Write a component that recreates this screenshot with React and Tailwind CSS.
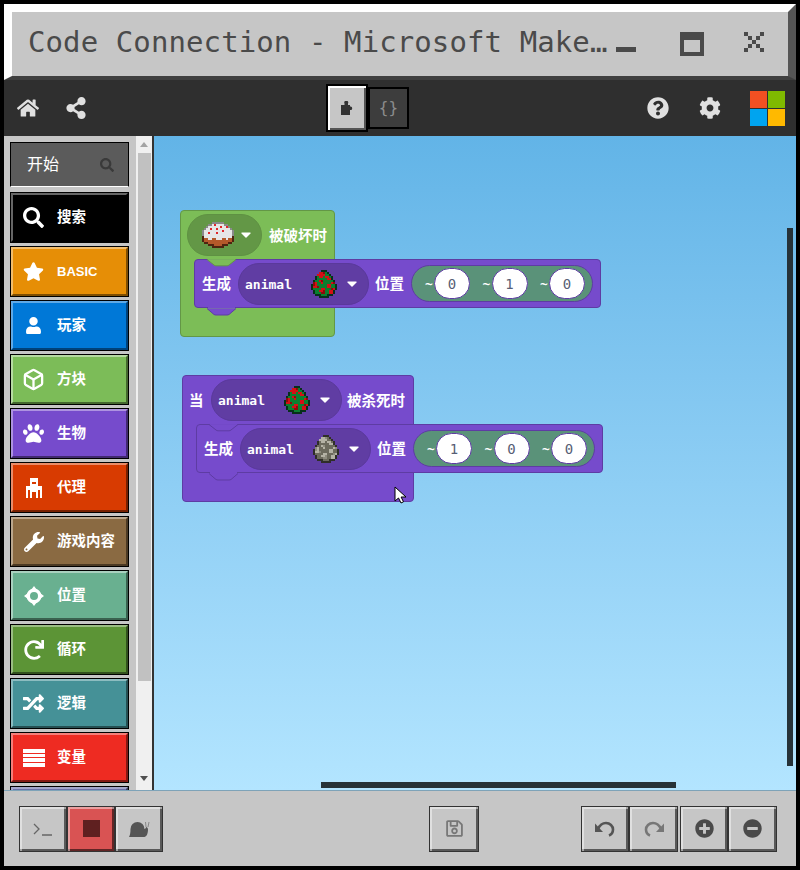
import React from 'react';
import {
  FaSearch, FaStar, FaUser, FaPaw, FaWrench, FaRedo, FaRandom, FaHome, FaShareAlt,
  FaQuestionCircle, FaCog, FaRegSave, FaPlusCircle, FaMinusCircle,
} from 'react-icons/fa';
import { Box } from 'lucide-react';

const CJK = "font-['Liberation_Sans','Noto_Sans_CJK_SC',sans-serif]";
const MONO = "font-['DejaVu_Sans_Mono',monospace]";

// pixel drawing helper, one char = one colour from the palette
const Pixels = ({ rows, palette, size, className }) => (
  <svg
    className={className}
    width={rows[0].length * size}
    height={rows.length * size}
    viewBox={`0 0 ${rows[0].length} ${rows.length}`}
    shapeRendering="crispEdges"
  >
    {rows.map((row, y) =>
      row.split('').map((c, x) =>
        palette[c] ? <rect key={`${x}-${y}`} x={x} y={y} width="1" height="1" fill={palette[c]} /> : null
      )
    )}
  </svg>
);

const EGG = [
  '.....ccc.....',
  '....bbdac....',
  '...bbbbaac...',
  '..cabbabbac..',
  '..caaaaabbc..',
  '.caabdaaaaac.',
  '.dbaabaaaabd.',
  'cdbaaaaabbaac',
  'cbbdaaaabbaac',
  'caaaabbaaadbc',
  '.caabbdaabbc.',
  '.caaaddaabbc.',
  '..cccaaaccc..',
  '....ccccc....',
];
const GREEN_EGG = { a: '#0b7f2f', b: '#d40f14', c: '#07301a', d: '#8a0b0b' };
const GRAY_EGG = { a: '#6c6a5d', b: '#b4b2a5', c: '#2f2e28', d: '#8e8c7f' };

const CAKE = [
  '.....ssssss.....',
  '...sswrwwwwss...',
  '..swwwwwwrwwrs..',
  '.swwrwwrwwwwwws.',
  'swwwwwwwwwrwwwws',
  'swwrwwwrwwwwwwws',
  'swwwwwwwwwwwwwws',
  'dwwwwwwwwwwwwwwd',
  'dbbwwbbwwwbbwbbd',
  'dbbbbbbbbbbbbbbd',
  '.ddbbbbbbbbbbdd.',
  '...dddbbbbddd...',
  '.....dddddd.....',
];
const CAKE_COLORS = { s: '#8a8a8a', w: '#e6e6e6', r: '#e0262a', b: '#b4592a', d: '#4f2410' };

const AGENT = [
  '..kkkk..',
  '..kkkk..',
  '..k..k..',
  '..kkkk..',
  'kkkkkkkk',
  'kkkkkkkk',
  'k.kkkk.k',
  'k.k..k.k',
  'k.k..k.k',
  'k.k..k.k',
];

const MoveIcon = () => (
  <svg width="20" height="20" viewBox="0 0 20 20" fill="white">
    <path fillRule="evenodd" d="M10 2.500a7.500 7.500 0 1 0 0 15 7.500 7.500 0 0 0 0-15Zm0 3.500a4 4 0 1 1 0 8 4 4 0 0 1 0-8Z" />
    <path d="M10 0l3 4H7zM10 20l-3-4h6zM0 10l4-3v6zM20 10l-4 3V7z" />
  </svg>
);

const BarsIcon = () => (
  <svg width="22" height="18" viewBox="0 0 22 18" fill="white" shapeRendering="crispEdges">
    <path d="M0 0h22v3.500H0zM0 4.700h22v3.500H0zM0 9.400h22v3.500H0zM0 14.100h22v3.500H0z" />
  </svg>
);

const PuzzleIcon = () => (
  <svg width="12" height="14" viewBox="0 0 12 14" fill="#333">
    <path d="M0 4h3.500V2.500a2 2 0 1 1 3.500 0V4h2v1.500a1.800 1.800 0 1 1 0 3.500V14H0Z" />
  </svg>
);

const UndoIcon = () => (
  <svg width="20" height="16" viewBox="0 0 20 16" fill="none">
    <path d="M3 8C5 3.500 8 2 11 2c4 0 7 3 7 6.500 0 3-1.500 5-4 6" stroke="currentColor" strokeWidth="2.600" />
    <path d="M0 2.500V11h8Z" fill="currentColor" />
  </svg>
);

const categories = [
  { label: '搜索', color: 'bg-black border-t-[#666] border-l-[#666] border-r-black border-b-black', icon: <FaSearch size={21} /> },
  { label: 'BASIC', latin: true, color: 'bg-[#e68e06] border-t-[#f2bd6c] border-l-[#f2bd6c] border-r-[#7e4e03] border-b-[#7e4e03]', icon: <FaStar size={21} /> },
  { label: '玩家', color: 'bg-[#0078d7] border-t-[#5fa9e6] border-l-[#5fa9e6] border-r-[#00427a] border-b-[#00427a]', icon: <FaUser size={17} /> },
  { label: '方块', color: 'bg-[#7cbc58] border-t-[#b6daa2] border-l-[#b6daa2] border-r-[#44672f] border-b-[#44672f]', icon: <Box size={23} strokeWidth={2.4} /> },
  { label: '生物', color: 'bg-[#764bcc] border-t-[#ad92e0] border-l-[#ad92e0] border-r-[#412970] border-b-[#412970]', icon: <FaPaw size={21} /> },
  { label: '代理', color: 'bg-[#d83b01] border-t-[#e98d6a] border-l-[#e98d6a] border-r-[#772000] border-b-[#772000]', icon: <Pixels rows={AGENT} palette={{ k: '#ffffff' }} size={2} /> },
  { label: '游戏内容', color: 'bg-[#8a6a42] border-t-[#bba78d] border-l-[#bba78d] border-r-[#4c3a24] border-b-[#4c3a24]', icon: <FaWrench size={20} /> },
  { label: '位置', color: 'bg-[#69b090] border-t-[#a9d1bf] border-l-[#a9d1bf] border-r-[#3a614f] border-b-[#3a614f]', icon: <MoveIcon /> },
  { label: '循环', color: 'bg-[#5c9436] border-t-[#9abd83] border-l-[#9abd83] border-r-[#32511e] border-b-[#32511e]', icon: <FaRedo size={20} /> },
  { label: '逻辑', color: 'bg-[#459197] border-t-[#8cbcc0] border-l-[#8cbcc0] border-r-[#265053] border-b-[#265053]', icon: <FaRandom size={21} /> },
  { label: '变量', color: 'bg-[#ee2b22] border-t-[#f57f7a] border-l-[#f57f7a] border-r-[#831813] border-b-[#831813]', icon: <BarsIcon /> },
  { label: '', color: 'bg-[#6a6ea8] border-t-[#a3a5cb] border-l-[#a3a5cb] border-r-[#3a3d5c] border-b-[#3a3d5c]', icon: null },
];

const Caret = () => (
  <svg width="10" height="6" viewBox="0 0 10 6" className="shrink-0">
    <path d="M1 .5h8a.7.7 0 0 1 .5 1.100L5.500 5.400a.7.7 0 0 1-1 0L.5 1.600A.7.7 0 0 1 1 .5Z" fill="white" />
  </svg>
);

const Label = ({ children, className = '' }) => (
  <span className={`${CJK} pt-[2px] text-[14.5px] font-bold leading-none text-white whitespace-nowrap ${className}`}>{children}</span>
);

const AnimalDropdown = ({ palette }) => (
  <div className="flex h-[42px] w-[131px] shrink-0 items-center rounded-full border border-[#5a399b] bg-[#603da3] pl-[6px]">
    <span className={`${MONO} w-[66px] pt-[1px] text-[13px] font-bold leading-none text-white`}>animal</span>
    <Pixels rows={EGG} palette={palette} size={2} />
    <span className="ml-[10px]"><Caret /></span>
  </div>
);

const Coord = ({ value }) => (
  <div className="flex items-center">
    <span className={`${MONO} w-[9px] text-[13px] font-bold leading-none text-white`}>~</span>
    <div className={`${MONO} flex h-[31px] w-[36px] items-center justify-center rounded-full border border-[#5e3ca3] bg-white pt-[1px] text-[14px] text-[#575e75]`}>
      {value}
    </div>
  </div>
);

// the "spawn animal at position" block used in both stacks
const SpawnBlock = ({ palette, coords, topNotch }) => (
  <div className="relative ml-[13px] flex h-[49px] w-[407px] items-center rounded-[4px] border border-[#5e3ca3] bg-[#764bcc] pl-[7px]">
    {topNotch}
    <Label className="w-[36px]">生成</Label>
    <AnimalDropdown palette={palette} />
    <Label className="ml-[6px] w-[36px]">位置</Label>
    <div className="flex h-[37px] w-[182px] items-center justify-between rounded-full border border-[#5e3ca3] bg-[#5a9279] pl-[13px] pr-[7px]">
      {coords.map((v, i) => <Coord key={i} value={v} />)}
    </div>
    <svg className="absolute left-[12px] top-[47px]" width="30" height="9" viewBox="0 0 30 9">
      <path d="M0 1.500 L7 7.500 Q8 8 9 8 H20 Q21 8 22 7.500 L29 1.500" fill="#764bcc" stroke="#5e3ca3" />
      <path d="M1 0H28V1.500H1Z" fill="#764bcc" />
    </svg>
  </div>
);

const Notch = ({ fill, stroke }) => (
  <svg className="absolute left-[12px] top-[-1px]" width="30" height="8" viewBox="0 0 30 8">
    <path d="M0 .5 L7 6 Q8 6.800 9 6.800 H20 Q21 6.800 22 6 L29 .5" fill={fill} stroke={stroke} />
    <path d="M1 0H28V.8H1Z" fill={fill} />
  </svg>
);

const ToolButton = ({ className = '', children }) => (
  <div className={`flex h-[46px] items-center justify-center border border-[#333] shadow-[inset_2px_2px_0_rgba(255,255,255,0.45),inset_-2px_-2px_0_rgba(0,0,0,0.55)] ${className}`}>
    {children}
  </div>
);

export default function App() {
  return (
    <div className="flex h-[870px] w-[800px] flex-col overflow-hidden bg-black p-1">
      {/* title bar */}
      <div className="flex h-[76px] shrink-0 items-start border-b-[4px] border-l-[8px] border-r-[8px] border-t-[8px] border-b-[#3f3f3f] border-l-white border-r-[#555] border-t-white bg-[#c6c6c6]">
        <span className={`${MONO} ml-[16px] mt-[10px] w-[588px] whitespace-nowrap text-[29px] leading-[40px] tracking-[0.1px] text-[#4a4a4a]`}>
          Code Connection - Microsoft Make…
        </span>
        <div className="mt-[35px] h-[5px] w-[20px] bg-[#4a4a4a]" />
        <div className="ml-[44px] mt-[20px] h-[24px] w-[24px] border-[4px] border-t-[8px] border-[#4a4a4a]" />
        <svg className="ml-[40px] mt-[20px]" width="20" height="20" viewBox="0 0 10 10" shapeRendering="crispEdges" fill="#4a4a4a">
          <path d="M0 0h2v2H0zM8 0h2v2H8zM2 2h2v2H2zM6 2h2v2H6zM4 4h2v2H4zM2 6h2v2H2zM6 6h2v2H6zM0 8h2v2H0zM8 8h2v2H8z" />
        </svg>
      </div>

      {/* toolbar */}
      <div className="flex h-[56px] shrink-0 items-center bg-[#2f2f2f] text-[#e0e0e0]">
        <div className="flex w-[322px] items-center gap-[26px] pl-[13px]">
          <FaHome size={22} />
          <FaShareAlt size={22} />
        </div>
        <div className="flex items-center">
          <div className="flex h-[48px] w-[42px] items-center justify-center border-[2px] border-black bg-[#c6c6c6] shadow-[inset_2px_2px_0_#fff,inset_-2px_-2px_0_#555]">
            <PuzzleIcon />
          </div>
          <div className={`${MONO} flex h-[42px] w-[41px] items-center justify-center border-[2px] border-black bg-[#3d3d3d] text-[16px] text-[#8c8c8c]`}>
            {'{}'}
          </div>
        </div>
        <div className="ml-auto flex items-center pr-[11px]">
          <FaQuestionCircle size={22} />
          <span className="ml-[30px]"><FaCog size={22} /></span>
          <div className="ml-[29px] grid h-[35px] w-[35px] grid-cols-2 gap-[1px]">
            <div className="bg-[#f25022]" />
            <div className="bg-[#7fba00]" />
            <div className="bg-[#00a4ef]" />
            <div className="bg-[#ffb900]" />
          </div>
        </div>
      </div>

      {/* workspace */}
      <div className="flex h-[654px] shrink-0">
        <div className="flex w-[132px] shrink-0 flex-col overflow-hidden bg-[#c6c6c6] pl-[6px] pt-[6px]">
          <div className="mb-[5px] flex h-[45px] w-[119px] shrink-0 items-center justify-between border border-black border-b-white bg-[#5b5b5b] pl-[16px] pr-[14px]">
            <span className={`${CJK} text-[16px] leading-none text-white`}>开始</span>
            <FaSearch size={14} className="text-[#3a3a3a]" />
          </div>
          <div className="flex flex-col gap-[3px]">
            {categories.map((c, i) => (
              <div key={i} className="h-[51px] w-[119px] shrink-0 border border-black">
                <div className={`flex h-full items-center border-[2px] text-white ${c.color}`}>
                  <span className="flex w-[41px] shrink-0 justify-center">{c.icon}</span>
                  <span className={`${CJK} ml-[3px] font-bold leading-none ${c.latin ? 'text-[13px]' : 'text-[14.5px]'}`}>{c.label}</span>
                </div>
              </div>
            ))}
          </div>
        </div>

        {/* sidebar scrollbar */}
        <div className="flex w-[16px] shrink-0 flex-col items-center bg-[#f0f0f0]">
          <svg className="mt-[6px]" width="8" height="5" viewBox="0 0 8 5"><path d="M4 0l4 5H0z" fill="#a3a3a3" /></svg>
          <div className="mt-[6px] h-[528px] w-[13px] bg-[#c1c1c1]" />
          <svg className="mt-[95px]" width="8" height="5" viewBox="0 0 8 5"><path d="M4 5L0 0h8z" fill="#505050" /></svg>
        </div>

        {/* block canvas */}
        <div className="relative flex-1 overflow-hidden border-l-[2px] border-[#333] bg-linear-to-b from-[#62b4e7] to-[#b3e5ff]">
          <div className="absolute left-[26px] top-[74px] h-[127px] w-[155px] rounded-[4px] border border-[#639746] bg-[#7cbd57]">
            <div className="flex h-[48px] items-center pl-[6px]">
              <div className="flex h-[42px] w-[75px] items-center rounded-full border border-[#5f9143] bg-[#639746] pl-[14px]">
                <Pixels rows={CAKE} palette={CAKE_COLORS} size={2} />
                <span className="ml-[7px]"><Caret /></span>
              </div>
              <Label className="ml-[7px]">被破坏时</Label>
            </div>
            <SpawnBlock palette={GREEN_EGG} coords={[0, 1, 0]} topNotch={<Notch fill="#7cbd57" stroke="#639746" />} />
          </div>

          <div className="absolute left-[28px] top-[239px] h-[127px] w-[232px] rounded-[4px] border border-[#5e3ca3] bg-[#764bcc]">
            <div className="flex h-[48px] items-center pl-[6px]">
              <Label className="w-[22px]">当</Label>
              <AnimalDropdown palette={GREEN_EGG} />
              <Label className="ml-[5px]">被杀死时</Label>
            </div>
            <SpawnBlock palette={GRAY_EGG} coords={[1, 0, 0]} topNotch={<Notch fill="#764bcc" stroke="#5e3ca3" />} />
            <svg className="absolute left-[211px] top-[110px]" width="14" height="18" viewBox="0 0 14 18">
              <path d="M1 1v14l3.500-3 2.500 5 2.500-1.200-2.400-4.800H12Z" fill="white" stroke="black" />
            </svg>
          </div>

          <div className="absolute left-[633px] top-[92px] h-[538px] w-[6px] bg-[#263238]" />
          <div className="absolute left-[167px] top-[646px] h-[6px] w-[355px] bg-[#263238]" />
        </div>
      </div>

      {/* bottom bar */}
      <div className="flex h-[76px] shrink-0 items-center border-t border-[#7ea3b8] bg-[#c6c6c6] pl-[15px]">
        <ToolButton className="w-[48px] bg-[#c6c6c6] text-[#666]">
          <svg width="20" height="16" viewBox="0 0 20 16" fill="none" stroke="#666" strokeWidth="1.300">
            <path d="M1 3l5 5-5 5M9 14h10" />
          </svg>
        </ToolButton>
        <ToolButton className="w-[48px] bg-[#d95353]">
          <div className="h-[17px] w-[17px] bg-[#5f2020]" />
        </ToolButton>
        <ToolButton className="w-[48px] bg-[#c6c6c6]">
          <svg width="21" height="18" viewBox="0 0 21 18" fill="#555">
            <path d="M0 17c1-2 1.500-4 1.500-8a7 7 0 0 1 14 0v8Z" />
            <path d="M15 17V9c1 0 2-.5 2-2 1 0 2 1 2 2.500 0 3-1 7.500-4 7.500Z" />
            <path d="M17 7l-.5-5M19 7l1-5" stroke="#777" strokeWidth=".8" />
          </svg>
        </ToolButton>
        <ToolButton className="ml-[266px] w-[50px] bg-[#c6c6c6] text-[#777]">
          <FaRegSave size={19} />
        </ToolButton>
        <ToolButton className="ml-[102px] w-[48px] bg-[#c6c6c6] text-[#555]">
          <UndoIcon />
        </ToolButton>
        <ToolButton className="w-[49px] bg-[#c6c6c6] text-[#777]">
          <span className="-scale-x-100"><UndoIcon /></span>
        </ToolButton>
        <ToolButton className="ml-[2px] w-[48px] bg-[#c6c6c6] text-[#4a4a4a]">
          <FaPlusCircle size={19} />
        </ToolButton>
        <ToolButton className="w-[49px] bg-[#c6c6c6] text-[#4a4a4a]">
          <FaMinusCircle size={19} />
        </ToolButton>
      </div>
    </div>
  );
}
